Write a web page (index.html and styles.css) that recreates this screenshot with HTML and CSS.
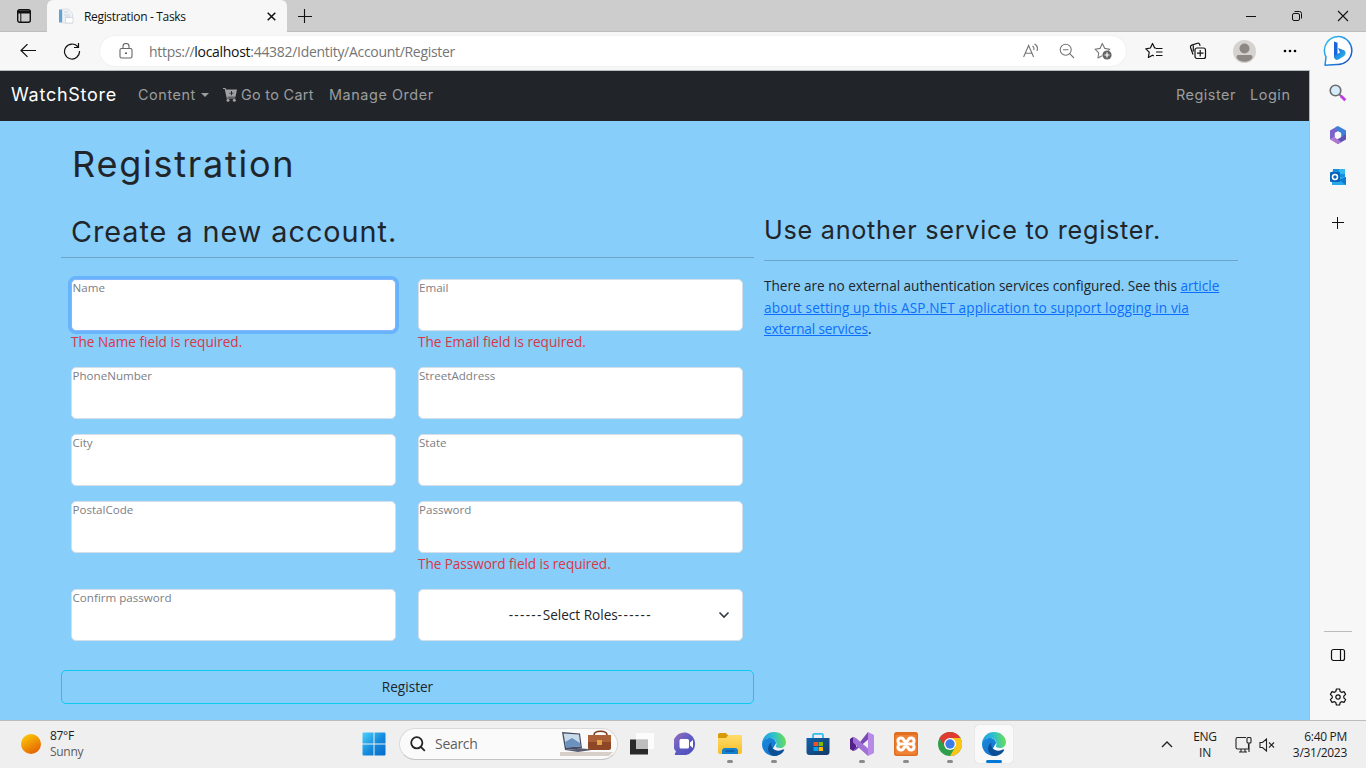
FILE: index.html
```html
<!DOCTYPE html>
<html lang="en">
<head>
<meta charset="utf-8">
<title>Registration - Tasks</title>
<link rel="stylesheet" href="styles.css">
</head>
<body>
<svg class="defs" width="0" height="0">
  <defs>
    <linearGradient id="edgeTop" x1="0" y1="0.5" x2="1" y2="0.4"><stop offset="0" stop-color="#1d9ae0"/><stop offset=".5" stop-color="#2fbfd0"/><stop offset="1" stop-color="#6be04c"/></linearGradient>
    <linearGradient id="edgeLow" x1="0" y1="0" x2=".6" y2="1"><stop offset="0" stop-color="#1a86dc"/><stop offset="1" stop-color="#1279d0"/></linearGradient>
    <linearGradient id="win" x1="0" y1="0" x2="24" y2="24" gradientUnits="userSpaceOnUse"><stop offset="0" stop-color="#4fd3fd"/><stop offset=".55" stop-color="#1389dc"/><stop offset="1" stop-color="#0669c8"/></linearGradient>
    <linearGradient id="sun" x1="0.2" y1="0" x2="0.8" y2="1"><stop offset="0" stop-color="#fccb05"/><stop offset="1" stop-color="#e35c04"/></linearGradient>
    <linearGradient id="chat" x1="0" y1="0" x2="1" y2="1"><stop offset="0" stop-color="#9a6fb8"/><stop offset=".5" stop-color="#5f5cc4"/><stop offset="1" stop-color="#4a4db8"/></linearGradient>
    <linearGradient id="folder" x1="0" y1="0" x2="0" y2="1"><stop offset="0" stop-color="#ffdc6b"/><stop offset="1" stop-color="#f9be27"/></linearGradient>
    <linearGradient id="store" x1="0" y1="0" x2="1" y2="1"><stop offset="0" stop-color="#0f63ae"/><stop offset="1" stop-color="#163a66"/></linearGradient>
    <linearGradient id="bingRing" x1="0" y1="0" x2="1" y2="1"><stop offset="0" stop-color="#35c3f0"/><stop offset=".6" stop-color="#1e7fe0"/><stop offset="1" stop-color="#1d3eb0"/></linearGradient>
    <linearGradient id="bingB" x1="0" y1="0" x2="1" y2="1"><stop offset="0" stop-color="#1b5fd8"/><stop offset="1" stop-color="#2cc4ea"/></linearGradient>
    <symbol id="edge" viewBox="0 0 24 24">
      <path fill="url(#edgeLow)" d="M0 12C.5 7.500 4.500 5.500 9 6c3 .4 5 3 5 5.200L10 18l6 5.200C14.800 23.800 13.400 24 12 24 5.500 24 0 19 0 12Z"/>
      <path fill="#0c4f96" d="M10 10.300C9 11.200 9 12.500 9.300 13.800c.9 3.600 4.700 5.700 8.700 4.700 2-.5 3.200-1.300 4-.9.700.4-.2 1.600-1.200 2.600C18.500 22.700 15.500 24 12.200 24 7 23 5.200 18 6.500 14.300c.7-2 2-3.300 3.500-4Z"/>
      <path fill="url(#edgeTop)" d="M0 11.500C.6 4.800 5.500 0 12 0c7 0 12 5 12 10.200 0 3.800-3 5.800-6 5.800-2.500 0-4.200-.8-4.200-1.700 0-.5 1-1.100.6-3C13.800 8 11.500 6 8 6 4.500 6 1.300 8 0 11.500Z"/>
    </symbol>
  </defs>
</svg>

<header class="tabs">
  <div class="tab-menu"><svg width="14" height="14" viewBox="0 0 14 14"><rect x=".7" y=".7" width="12.600" height="12.600" rx="2" fill="none" stroke="#111" stroke-width="1.400"/><path d="M.7 1.500h12.600v3H.7z" fill="#111"/><path d="M3.800 4v9" stroke="#111"/></svg></div>
  <div class="tab">
    <svg width="16" height="16" viewBox="0 0 16 16"><path d="M1 1.500h3v13H1z" fill="#5aa5d8"/><path d="M4.500 1h6l4 4.500V15h-10z" fill="#eef1f6" stroke="#d3d8e0" stroke-width=".7"/><path d="M6 4h4M6 7h6M7 9h5" stroke="#cdd4de"/><path d="M7.500 9.500H15V15H7.500z" fill="#fff" stroke="#c6cdd8" stroke-width=".7"/></svg>
    <span class="tab-title">Registration - Tasks</span>
    <svg width="9" height="9" viewBox="0 0 9 9"><path d="m.7.700 7.600 7.600M8.300.7.700 8.300" stroke="#111" stroke-width="1.500"/></svg>
  </div>
  <div class="new-tab"><svg width="14" height="14" viewBox="0 0 14 14"><path d="M6.500 0v14M0 7.500h14" stroke="#111" stroke-width="1.100"/></svg></div>
  <div class="window-controls">
    <svg width="46" height="32" viewBox="0 0 46 32"><path d="M18 16.500h10" stroke="#111"/></svg>
    <svg width="46" height="32" viewBox="0 0 46 32" fill="none" stroke="#111"><rect x="18.500" y="13.500" width="7" height="7" rx="1.500"/><path d="M20.500 11.500h5a2 2 0 0 1 2 2v5"/></svg>
    <svg width="46" height="32" viewBox="0 0 46 32"><path d="m18 11 10 10m0-10L18 21" stroke="#111" stroke-width="1.100"/></svg>
  </div>
</header>

<div class="toolbar">
  <div class="tool back"><svg width="16" height="14" viewBox="0 0 16 14" fill="none" stroke="#111" stroke-width="1.200"><path d="M16 6.500H1M7.500.1 1 6.500l6.500 6.400"/></svg></div>
  <div class="tool refresh"><svg width="18" height="18" viewBox="0 0 18 18" fill="none" stroke="#111" stroke-width="1.200"><path d="M15 5A7.500 7.500 0 1 0 16.500 9M15.500 1v4.500H11"/></svg></div>
  <div class="address">
    <div class="tool lock"><svg width="14" height="16" viewBox="0 0 14 16" fill="none" stroke="#666" stroke-width="1.100"><rect x="1" y="5.500" width="12" height="9.500" rx="1.500"/><path d="M4 5.500V3.500a3 3 0 0 1 6 0v2"/><path d="M6.200 10.200h1.600" stroke="#333" stroke-width="1.600"/></svg></div>
    <span class="url">https://<b>localhost</b>:44382/Identity/Account/Register</span>
    <div class="tool act"><svg width="16" height="16" viewBox="0 0 16 16" fill="none" stroke="#757575" stroke-width="1.100"><path d="m.6 14 5-11.500 5 11.500M2.200 10.200h6.800M9.500 3c1.300.8 1.700 2.500 1.200 4M11.500 1c2.600 1.300 3.400 4.200 2.500 7"/></svg></div>
    <div class="tool act"><svg width="16" height="16" viewBox="0 0 16 16" fill="none" stroke="#757575" stroke-width="1.100"><circle cx="6.700" cy="6.700" r="5.500"/><path d="M4 6.700h5.400M10.700 10.700l4.300 4.300"/></svg></div>
    <div class="tool act"><svg width="18" height="18" viewBox="0 0 18 18" fill="none" stroke="#757575" stroke-width="1.100"><path d="m5 15.500-1 .5.700-5.200L1 7.200l5-.8L8.300 1.500l2.500 4.900 5 .8-1.500 1.500M5 15.500l3-1.700" stroke-linejoin="round"/><circle cx="13" cy="13" r="4.600" fill="#666" stroke="none"/><path d="M13 10.500v5M10.500 13h5" stroke="#fff" stroke-width="1.200"/></svg></div>
  </div>
  <div class="tool fav"><svg width="18" height="18" viewBox="0 0 18 18" fill="none" stroke="#111" stroke-width="1.200" stroke-linejoin="round"><path d="M11 6.200 9.700 6 7.500 1.500 5.400 6l-4.600.8 3.400 3.400-.8 5.300 4.100-2.300 1.300.7"/><path d="M11 6.500h6.500M11 10h6.500M11 13.500h6.500"/></svg></div>
  <div class="tool coll"><svg width="18" height="18" viewBox="0 0 18 18" fill="none" stroke="#111" stroke-width="1.200"><rect x="6" y="6" width="10.500" height="10.500" rx="2"/><path d="M11.200 8v6.500M8 11.200h6.500M4 12.500 1.500 5.500c-.4-1.200.2-2 1.200-2.400L8.500 1.200c1.200-.4 2 .1 2.600 2.600M4.300 3.500v6"/></svg></div>
  <div class="tool avatar"><svg width="23" height="23" viewBox="0 0 23 23"><circle cx="11.500" cy="11.500" r="11.500" fill="#d5d2cf"/><circle cx="11.500" cy="8.500" r="5" fill="#8d8883"/><path d="M3.500 17.500c0-2 1-2.500 2.500-2.500h11c1.500 0 2.500.5 2.500 2.500-3 5.800-13 5.800-16 0Z" fill="#8d8883"/></svg></div>
  <div class="tool dots"><svg width="14" height="4" viewBox="0 0 14 4"><circle cx="2" cy="2" r="1.300"/><circle cx="7" cy="2" r="1.300"/><circle cx="12" cy="2" r="1.300"/></svg></div>
  <div class="tool bing"><svg width="32" height="32" viewBox="0 0 32 32"><path d="M16 1.500a14 14 0 1 1-2.500 28L2 30.300l1-8.500A14 14 0 0 1 16 1.500Z" fill="#fff" stroke="url(#bingRing)" stroke-width="1.500" stroke-linejoin="round"/><path d="m11 6.500 3.500 1.300V20L11 23Z" fill="#1866dd"/><path d="m11 21 6-3.500-2-4.500 6 2.300c2.500 1.500 2 4.700-.5 6.200l-5 3c-3 1.400-4.500-.8-4.500-3.500Z" fill="url(#bingB)"/></svg></div>
</div>

<div class="workspace">
  <main class="page">
    <nav class="navbar">
      <span class="brand">WatchStore</span>
      <span class="nav-link content">Content</span><i class="caret"></i>
      <svg class="cart" width="14" height="14" viewBox="0 0 14 14" fill="#a0a1a3"><path fill-rule="evenodd" d="M0 0h2.500l.6 1.500H14l-1.500 7.200H4.600l.2.900h7.500v1H3.800L1.700 1H0ZM8 3v1.700H6.300v.9H8v1.700h.9V5.600h1.700v-.9H8.900V3Z"/><circle cx="5" cy="12.300" r="1.500"/><circle cx="11.300" cy="12.300" r="1.500"/></svg>
      <span class="nav-link go">Go to Cart</span>
      <span class="nav-link manage">Manage Order</span>
      <span class="nav-link reg">Register</span>
      <span class="nav-link login">Login</span>
    </nav>
    <div class="container">
      <h1>Registration</h1>
      <div class="columns">
        <section class="account">
          <h2>Create a new account.</h2>
          <form class="fields">
            <div class="field"><label class="box focused">Name</label><span class="error">The Name field is required.</span></div>
            <div class="field"><label class="box">Email</label><span class="error">The Email field is required.</span></div>
            <div class="field"><label class="box">PhoneNumber</label></div>
            <div class="field"><label class="box">StreetAddress</label></div>
            <div class="field"><label class="box">City</label></div>
            <div class="field"><label class="box">State</label></div>
            <div class="field"><label class="box">PostalCode</label></div>
            <div class="field"><label class="box">Password</label><span class="error e-pass">The Password field is required.</span></div>
            <div class="field"><label class="box">Confirm password</label></div>
            <div class="field"><div class="box select"><span><span class="dash">------</span>Select Roles<span class="dash">------</span></span><svg width="12" height="8" viewBox="0 0 12 8"><path d="m1.500 1.500 4.500 4.500 4.500-4.500" fill="none" stroke="#343a40" stroke-width="1.600"/></svg></div></div>
          </form>
          <button class="submit" type="button">Register</button>
        </section>
        <section class="service">
          <h3>Use another service to register.</h3>
          <p><span class="l1">There are no external authentication services configured. See this <a>article</a></span><br><a class="l2">about setting up this ASP.NET application to support logging in via</a><br><span class="l3"><a>external services</a>.</span></p>
        </section>
      </div>
    </div>
  </main>
  <aside class="sidebar">
    <svg width="18" height="18" viewBox="0 0 18 18"><circle cx="6.500" cy="6.500" r="5.300" fill="#d5ecfa" stroke="#6b6b6b" stroke-width="1.600"/><path d="m10.500 10.500 2 2" stroke="#777" stroke-width="2"/><path d="m12 12 4.300 4.200" stroke="#c239e8" stroke-width="3"/></svg>
    <svg width="18" height="18" viewBox="0 0 18 18"><path d="M8 .5 1 4.500v9l4.800-2.500V7L11 4Z" fill="#7b62c9"/><path d="M6.500 1.300 9 0l8 4.500V10l-4.800 1V7L7 4Z" fill="#3f7fd8"/><path d="M17 8v5.500L9 18l-4-2.500 7.200-4.500Z" fill="#5b54b5"/><path d="M1 13.500 9 18l3.500-2-3.500-2-3.200-3Z" fill="#ae78d0"/><circle cx="9" cy="9" r="3.100" fill="#f7f7f7"/></svg>
    <svg width="18" height="18" viewBox="0 0 18 18"><path d="M4 1h12v15H3V8Z" fill="#1490df"/><path d="M10 1h6v5h-6z" fill="#35b8f1"/><path d="M3 9h14v8H3Z" fill="#28a8ea"/><path d="m10 12 7-3v8Z" fill="#0f78d4"/><rect x="1" y="4" width="10" height="10" rx="1" fill="#0a64bb"/><circle cx="6" cy="9" r="2.500" fill="none" stroke="#fff" stroke-width="1.500"/></svg>
    <svg class="plus" width="12" height="12" viewBox="0 0 12 12"><path d="M5.500 0v12M0 5.500h12" stroke="#111"/></svg>
    <i class="rule"></i>
    <svg class="panel" width="16" height="14" viewBox="0 0 16 14" fill="none" stroke="#111" stroke-width="1.200"><rect x="1.500" y="1.500" width="13" height="11" rx="2"/><path d="M10.500 1.500v11"/></svg>
    <svg class="gear" width="18" height="18" viewBox="0 0 18 18" fill="none" stroke="#111" stroke-width="1.200" stroke-linejoin="round"><path d="M7.400 1h3.200l.6 2.500 1.300.8 2.500-.7L16.600 6.300 14.800 8.200v1.600l1.800 1.900L15 14.400l-2.500-.7-1.300.8-.6 2.500H7.400l-.6-2.500-1.300-.8-2.500.7-1.600-2.700L3.200 9.800V8.200L1.400 6.300 3 3.600l2.500.7 1.300-.8Z"/><circle cx="9" cy="9" r="2.200"/></svg>
  </aside>
</div>

<footer class="taskbar">
  <div class="weather"><svg width="20" height="20" viewBox="0 0 20 20"><circle cx="10" cy="10" r="10" fill="url(#sun)"/></svg><span class="lines"><span>87°F</span><span class="sunny">Sunny</span></span></div>
  <div class="app"><svg width="24" height="24" viewBox="0 0 24 24" fill="url(#win)"><path d="M.5 1.500q0-1 1-1h10v11h-11ZM12.500.5h10q1 0 1 1v10h-11ZM.5 12.500h11v11h-10q-1 0-1-1ZM12.500 12.500h11v10q0 1-1 1h-10Z"/></svg></div>
  <div class="search">
    <svg width="16" height="16" viewBox="0 0 16 16" fill="none" stroke="#222" stroke-width="1.800"><circle cx="6.800" cy="6.800" r="5.600"/><path d="m10.800 10.800 4 4"/></svg>
    <span>Search</span>
    <svg class="art" width="53" height="28" viewBox="0 0 53 28"><path d="M0 22h53l-4 4H0z" fill="#d8cfc8"/><path d="m2 2 18 1.500 2 15-17 1.500z" fill="#454b60"/><path d="m3.500 3.500 15.500 1 1.500 12-14.500 1z" fill="#c9dbea"/><path d="m5 12 7-4 8 5 .5 3.500-14.500 1z" fill="#6b92bf"/><path d="M5 20l17-1.500 13 1L18 22z" fill="#585c70"/><path d="M34 5c0-5 13-5 13 0" fill="none" stroke="#7b3f20" stroke-width="1.500"/><rect x="28" y="5" width="23" height="15" rx="2" fill="#8d4727"/><path d="M28 5h23v7H28z" fill="#ac6038"/><rect x="37" y="10" width="5" height="5" fill="#e2a44b"/></svg>
  </div>
  <div class="app"><svg width="24" height="24" viewBox="0 0 24 24"><path d="M0 7.500h18v15H0z" fill="#292929"/><path d="M6 1h18v16H6z" fill="#fff" fill-opacity=".82"/><path d="M6 7.500h12V17H6z" fill="#bdbdbd"/></svg></div>
  <div class="app"><svg width="24" height="24" viewBox="0 0 24 24"><path d="M12 .5a11.500 11.500 0 0 1 0 22.500H1.500c-1.200 0-.8-1 .5-3.500A11.500 11.500 0 0 1 12 .5Z" fill="url(#chat)"/><rect x="5.500" y="7" width="9.500" height="9.500" rx="1.500" fill="#fff"/><path d="m16 10.500 3-2.500v8l-3-2.500z" fill="#fff"/></svg></div>
  <div class="app running"><svg width="24" height="24" viewBox="0 0 24 24"><path d="M0 3q0-2 2-2h6l2.500 3v4H0Z" fill="#d89a08"/><path d="M0 6h8l2.500-3H23q1 0 1 1v16q0 2-2 2H2q-2 0-2-2Z" fill="url(#folder)"/><path d="M4 22v-3q0-3 3-3h10q3 0 3 3v3z" fill="#1680d0"/><path d="M7.500 19h9" stroke="#0b58a0" stroke-width="1.500"/></svg></div>
  <div class="app running"><svg width="24" height="24"><use href="#edge"/></svg></div>
  <div class="app"><svg width="24" height="24" viewBox="0 0 24 24"><path d="M7 6V3q0-1.200 1.200-1.200h7.600Q17 1.800 17 3v3" fill="none" stroke="#35bcf2" stroke-width="1.800"/><path d="M.5 6h23v14q0 3-3 3h-17q-3 0-3-3Z" fill="url(#store)"/><path d="M7.500 10H12v4H7.500z" fill="#f25022"/><path d="M12.700 10H17v4h-4.300z" fill="#7fba00"/><path d="M7.500 15H12v4H7.500z" fill="#00a4ef"/><path d="M12.700 15H17v4h-4.300z" fill="#ffb900"/></svg></div>
  <div class="app running"><svg width="24" height="24" viewBox="0 0 24 24"><path d="m0 7 3-2 3 2v10l-3 2-3-2Z" fill="#52218a"/><path d="M3 19 18 0v7.500L6 18Z" fill="#7b49b5"/><path d="M3 5l3 1 12 10.500V24L3 10.500Z" fill="#a071d6"/><path d="M18 0l6 3v18l-6 3Z" fill="#b78ae8"/></svg></div>
  <div class="app running"><svg width="24" height="24" viewBox="0 0 24 24"><rect width="24" height="24" rx="2.500" fill="#e06f20"/><rect x="1.500" y="3" width="21" height="19.500" rx="1" fill="#f08236"/><path d="M7 12a3 3 0 1 1 2.800-4c.3 1.500 4.100 1.500 4.400 0A3 3 0 1 1 17 12a3 3 0 1 1-2.800 4c-.3-1.500-4.100-1.500-4.400 0A3 3 0 1 1 7 12h10" fill="none" stroke="#fff" stroke-width="3"/></svg></div>
  <div class="app running"><svg width="24" height="24" viewBox="0 0 24 24"><circle cx="12" cy="12" r="12" fill="#2f9e4c"/><path d="M1.600 6A12 12 0 0 1 22.400 6H12L7 15Z" fill="#df3b30"/><path d="M22.400 6A12 12 0 0 1 12 24l5.200-9L12 6Z" fill="#fbc617"/><circle cx="12" cy="12" r="6" fill="#fff"/><circle cx="12" cy="12" r="4.700" fill="#3b7de8"/></svg></div>
  <div class="app running active"><svg width="24" height="24"><use href="#edge"/></svg></div>
  <div class="tray">
    <svg width="12" height="7" viewBox="0 0 12 7"><path d="m1 6 5-5 5 5" fill="none" stroke="#222" stroke-width="1.400"/></svg>
    <span class="lang"><span>ENG</span><span>IN</span></span>
    <svg width="17" height="17" viewBox="0 0 17 17" fill="none" stroke="#222" stroke-width="1.100"><path d="M11 1.500H2.500q-1.500 0-1.500 1.500v8.500q0 1.500 1.500 1.500h11V8M4 16h8M6 13v3M10 13v3M14 7v9"/><rect x="12" y="1.500" width="4" height="5.500" rx="1"/></svg>
    <svg class="mute" width="16" height="14" viewBox="0 0 16 14" fill="none" stroke="#222" stroke-width="1.100"><path d="M1 4.500h2.500L7.500 1v12L3.500 9.500H1ZM10 4.500l5 5M15 4.500l-5 5"/></svg>
    <span class="clock"><span class="time">6:40 PM</span><span class="date">3/31/2023</span></span>
  </div>
</footer>
</body>
</html>
```
FILE: styles.css
```css
* { box-sizing: border-box; }
body { margin: 0; width: 1366px; height: 768px; overflow: hidden; display: flex; flex-direction: column; font-family: "Open Sans", "Noto Sans", sans-serif; color: #212529; }
svg { display: block; flex: none; }
.defs { position: absolute; }
.tabs { height: 32px; display: flex; background: #cdcdcd; box-shadow: inset 0 -1px #bdbdbd; flex: none; }
.tab-menu { width: 47px; display: flex; align-items: center; padding-left: 17px; }
.tab { width: 240px; background: #f7f7f7; border-radius: 6px 6px 0 0; display: flex; align-items: center; padding: 0 11px; }
.tab-title { flex: 1; margin-left: 10px; font-size: 12px; color: #111; letter-spacing: -.33px; }
.new-tab { width: 34px; display: flex; align-items: center; padding-left: 11px; }
.window-controls { margin-left: auto; display: flex; }
.toolbar { height: 38px; flex: none; display: flex; background: #f7f7f7; align-items: center; }
.tool { display: flex; align-items: center; justify-content: center; height: 38px; }
.back { width: 55px; }
.refresh { width: 34px; margin-right: 11px; }
.address { width: 1026px; height: 30px; border-radius: 15px; background: #fff; display: flex; align-items: center; padding: 0 5px 0 3px; margin-right: 5px; box-shadow: 0 0 2px rgba(0,0,0,.08); }
.lock { width: 46px; }
.url { flex: 1; font-size: 14px; color: #757575; letter-spacing: -.3px; }
.url b { font-weight: 400; color: #111; }
.act { width: 36px; }
.fav { width: 46px; }
.coll { width: 42px; }
.avatar { width: 50px; }
.dots { width: 42px; }
.bing { width: 55px; }
.workspace { height: 650px; flex: none; display: flex; }
.page { width: 1310px; border-top: 1px solid #b9bdbd; border-right: 1px solid #b5b9bd; background: #87cefa; }
.navbar { height: 50px; background: #212529; display: flex; align-items: center; padding: 0 18px 3px 11px; font-family: Inter, sans-serif; }
.brand { width: 127px; font-size: 18px; color: #fff; letter-spacing: .75px; }
.nav-link { font-size: 14.4px; color: #9b9d9e; white-space: nowrap; letter-spacing: .58px; }
.content { width: 63px; }
.caret { border: 4px solid transparent; border-top-color: #9b9d9e; border-bottom: 0; margin-right: 14px; }
.cart { margin-right: 4px; margin-top: 1px; }
.go { width: 88px; letter-spacing: .32px; }
.reg { margin-left: auto; width: 74px; letter-spacing: .52px; }
.login { width: 41px; }
.container { padding: 22px 71px 0 61px; }
h1, h2, h3, p { margin: 0; font-weight: 400; }
h1, h2, h3 { font-family: Inter, sans-serif; white-space: nowrap; }
h1 { padding-left: 11px; font-size: 36px; line-height: 43px; letter-spacing: 1.75px; }
.columns { display: flex; gap: 10px; margin-top: 26px; }
.account { width: 693px; }
h2 { height: 46px; padding: 0 10px; font-size: 28.8px; line-height: 39px; border-bottom: 1px solid #6ea5c7; letter-spacing: .96px; }
.fields { display: grid; grid-template-columns: 325px 325px; column-gap: 22px; row-gap: 15px; margin: 21px 10px 0; }
.box { display: block; height: 52px; background: #fff; border: 1px solid #d5dfe8; border-radius: 5px; padding: 0 .5px; font-size: 11.600px; line-height: 16px; color: #7c8084; }
.field:nth-child(even) .box { padding-left: 0; }
.focused { border-color: #86b7fe; box-shadow: 0 0 0 3px #67b3fc; }
.error { display: block; height: 21px; font-size: 13.600px; line-height: 22px; color: #dc3545; white-space: nowrap; }
.e-pass { letter-spacing: -.06px; }
.box.select { display: flex; align-items: center; justify-content: center; position: relative; color: #212529; font-size: 13.600px; }
.dash { letter-spacing: 1.3px; }
.select svg { position: absolute; right: 12px; top: 21px; }
.submit { display: block; width: 693px; height: 34px; margin-top: 29px; border: 1px solid #0dcaf0; border-radius: 5px; background: none; font: 13.600px "Open Sans", sans-serif; color: #212529; padding: 0 0 2px; }
.service { width: 474px; }
h3 { height: 49px; font-size: 25.200px; line-height: 36px; border-bottom: 1px solid #6ea5c7; letter-spacing: .74px; }
.service p { margin-top: 14px; font-size: 13.600px; line-height: 21.600px; white-space: nowrap; }
.service a { color: #0d6efd; text-decoration: underline; }
.l1 { letter-spacing: -.025px; }
.l2 { letter-spacing: .13px; }
.l3 { letter-spacing: -.13px; }
.sidebar { width: 56px; background: #f7f7f7; display: flex; flex-direction: column; align-items: center; padding: 14px 0; }
.sidebar svg { margin-bottom: 24px; }
.sidebar .plus { margin-top: 7px; }
.rule { width: 28px; height: 1px; background: #bbb; margin-top: auto; margin-bottom: 16px; }
.sidebar .panel { margin-bottom: 18px; }
.sidebar .gear { margin: 8px 0 0; }
.taskbar { height: 48px; flex: none; background: #efefef; border-top: 1px solid #bcbcbc; display: flex; font-size: 12px; line-height: 16px; }
.weather { width: 352px; display: flex; align-items: center; padding-left: 21px; gap: 9px; padding-bottom: 2px; }
.lines, .lang, .clock { display: flex; flex-direction: column; letter-spacing: -.3px; color: #1b1b1b; }
.sunny { color: #5c5c5c; }
.app { width: 44px; position: relative; display: flex; align-items: center; justify-content: center; padding-bottom: 1px; }
.running::after { content: ""; position: absolute; left: 19px; top: 39px; width: 6px; height: 3px; border-radius: 2px; background: #8b8b8b; }
.active { width: 38px; height: 38px; margin: 4px 3px; background: #f9f9f9; border-radius: 4px; box-shadow: 0 0 1px rgba(0,0,0,.2); }
.active::after { left: 11px; top: 35px; width: 16px; background: #0078d4; }
.search { width: 219px; height: 32px; margin: 7px 2px 0 3px; border-radius: 16px; background: #fafafa; border: 1px solid #dadada; border-bottom-color: #c4c4c4; display: flex; align-items: center; padding: 0 4px 0 10px; }
.search span { flex: 1; margin-left: 9px; font-size: 14px; color: #5f5f5f; letter-spacing: -.3px; }
.tray { margin-left: auto; display: flex; align-items: center; padding-right: 19px; }
.lang { width: 30px; margin: 0 15px 0 17px; text-align: center; }
.mute { margin-left: 7px; }
.clock { width: 72px; text-align: right; }
```
